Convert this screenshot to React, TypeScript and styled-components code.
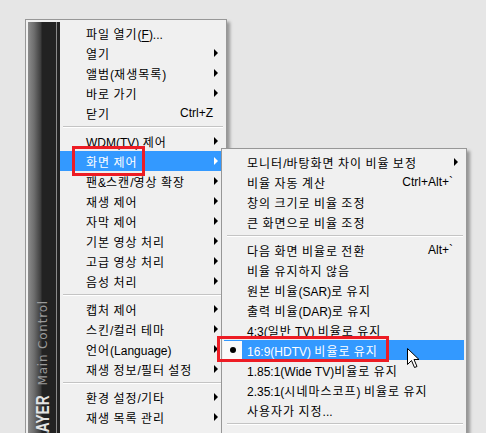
import React from 'react';
import styled, { createGlobalStyle } from 'styled-components';

const GlobalStyle = createGlobalStyle`
  html, body { margin: 0; padding: 0; }
  body {
    background: #e6e6e6;
    font-family: "Liberation Sans", "Noto Sans CJK KR", sans-serif;
    font-size: 12px;
    color: #000;
  }
`;

// Hangul glyphs from the CJK font run narrower than the original UI font
const Hangul = styled.span`
  letter-spacing: 1px;
`;

const Txt = ({ s }: { s: string }) => (
  <>
    {s.split(/([\uAC00-\uD7A3]+)/).map((part, i) =>
      /[\uAC00-\uD7A3]/.test(part) ? <Hangul key={i}>{part}</Hangul> : part
    )}
  </>
);

type Entry =
  | 'sep'
  | { label: React.ReactNode; shortcut?: string; sub?: boolean; active?: boolean; checked?: boolean };

const mainItems: Entry[] = [
  { label: <><Txt s="파일 열기" />(<u>F</u>)...</> },
  { label: '열기', sub: true },
  { label: '앨범(재생목록)', sub: true },
  { label: '바로 가기', sub: true },
  { label: '닫기', shortcut: 'Ctrl+Z' },
  'sep',
  { label: 'WDM(TV) 제어', sub: true },
  { label: '화면 제어', sub: true, active: true },
  { label: '팬&스캔/영상 확장', sub: true },
  { label: '재생 제어', sub: true },
  { label: '자막 제어', sub: true },
  { label: '기본 영상 처리', sub: true },
  { label: '고급 영상 처리', sub: true },
  { label: '음성 처리', sub: true },
  'sep',
  { label: '캡처 제어', sub: true },
  { label: '스킨/컬러 테마', sub: true },
  { label: '언어(Language)', sub: true },
  { label: '재생 정보/필터 설정', sub: true },
  'sep',
  { label: '환경 설정/기타', sub: true },
  { label: '재생 목록 관리', sub: true },
];

const screenItems: Entry[] = [
  { label: '모니터/바탕화면 차이 비율 보정', sub: true },
  { label: '비율 자동 계산', shortcut: 'Ctrl+Alt+`' },
  { label: '창의 크기로 비율 조정' },
  { label: '큰 화면으로 비율 조정' },
  'sep',
  { label: '다음 화면 비율로 전환', shortcut: 'Alt+`' },
  { label: '비율 유지하지 않음' },
  { label: '원본 비율(SAR)로 유지' },
  { label: '출력 비율(DAR)로 유지' },
  { label: '4:3(일반 TV) 비율로 유지' },
  { label: '16:9(HDTV) 비율로 유지', active: true, checked: true },
  { label: '1.85:1(Wide TV)비율로 유지' },
  { label: '2.35:1(시네마스코프) 비율로 유지' },
  { label: '사용자가 지정...' },
  'sep',
];

const Stage = styled.div`
  position: relative;
  height: 433px;
  overflow: hidden;
  padding: 19px 0 0 25px;
  box-sizing: border-box;
`;

const MenuBox = styled.div<{ $width: number }>`
  width: ${p => p.$width}px;
  box-sizing: border-box;
  background: #f0f0f0;
  border: 1px solid #979797;
  box-shadow: 3px 3px 3px rgba(0, 0, 0, 0.35);
  padding: 2px;
  display: flex;
  align-items: stretch;
`;

const SubMenu = styled(MenuBox)`
  position: absolute;
  left: 221px;
  top: 148px;
  padding: 3px 2px 30px;
  flex-direction: column;
`;

const SideBar = styled.div`
  width: 32px;
  flex: none;
  background: linear-gradient(to right, #8c8c8c 0, #6e6e6e 6px, #3c3c3c 13px, #222 14px,
    #222 28px, #8a8a8a 28px, #8a8a8a 29px, #222 29px);
  padding: 278px 0 0 5px;
  box-sizing: border-box;
  display: flex;
  flex-direction: column;
  overflow: hidden;
`;

const SideTitle = styled.div`
  writing-mode: vertical-rl;
  transform: rotate(180deg);
  line-height: 20px;
  white-space: nowrap;
  color: #9a9a9a;
`;

const Brand = styled.span`
  display: inline-block;
  font-family: "Liberation Sans", Arial, sans-serif;
  font-weight: bold;
  font-size: 19px;
  color: #e4e4e4;
  margin-inline-end: 10px;
  transform-origin: center bottom;
  transform: scaleY(0.72);
`;

const Caption = styled.span`
  font-family: "DejaVu Sans", sans-serif;
  font-size: 12px;
  letter-spacing: 0.8px;
`;

const Items = styled.div`
  flex: 1;
  padding: 1px 0 40px;
  display: flex;
  flex-direction: column;
`;

const Row = styled.div<{ $active?: boolean; $indent: number }>`
  height: 20px;
  display: flex;
  align-items: center;
  padding-left: ${p => p.$indent}px;
  white-space: nowrap;
  background: ${p => (p.$active ? '#3399ff' : 'transparent')};
  color: ${p => (p.$active ? '#fff' : '#000')};
  u { text-decoration: underline; text-underline-offset: 2px; }
`;

const CheckCell = styled.div<{ $on?: boolean }>`
  width: 19px;
  height: 18px;
  margin: 0 5px 0 -1px;
  display: flex;
  align-items: center;
  justify-content: center;
  background: ${p => (p.$on ? '#fafafa' : 'transparent')};
`;

const Dot = styled.span`
  width: 6px;
  height: 6px;
  border-radius: 50%;
  background: #000;
`;

const Label = styled.span`
  flex: 1;
`;

const Shortcut = styled.span``;

const ArrowCell = styled.span`
  width: 11px;
  flex: none;
  display: flex;
  align-items: center;
  padding-left: 1px;
  box-sizing: border-box;
`;

const Arrow = styled.span<{ $light?: boolean }>`
  width: 0;
  height: 0;
  border-left: 4px solid ${p => (p.$light ? '#fff' : '#000')};
  border-top: 4px solid transparent;
  border-bottom: 4px solid transparent;
`;

const Separator = styled.div<{ $from: number; $to: number }>`
  height: 8px;
  display: flex;
  align-items: center;
  padding: 0 ${p => p.$to}px 0 ${p => p.$from}px;
  &::after {
    content: '';
    flex: 1;
    border-top: 1px solid #c4c4c4;
    border-bottom: 1px solid #fff;
    box-sizing: border-box;
    height: 2px;
  }
`;

const Callout = styled.div<{ $x: number; $y: number; $w: number; $h: number }>`
  position: absolute;
  left: ${p => p.$x}px;
  top: ${p => p.$y}px;
  width: ${p => p.$w}px;
  height: ${p => p.$h}px;
  border: 3px solid #ed1c24;
  box-sizing: border-box;
  pointer-events: none;
`;

const Pointer = styled.svg`
  position: absolute;
  left: 407px;
  top: 348px;
`;

const MenuRows = ({ items, check, sepFrom, sepTo }: { items: Entry[]; check: boolean; sepFrom: number; sepTo: number }) => (
  <>
    {items.map((it, i) =>
      it === 'sep' ? (
        <Separator key={i} $from={sepFrom} $to={sepTo} />
      ) : (
        <Row key={i} $active={it.active} $indent={check ? 0 : 26}>
          {check && <CheckCell $on={it.checked}>{it.checked && <Dot />}</CheckCell>}
          <Label>{typeof it.label === 'string' ? <Txt s={it.label} /> : it.label}</Label>
          {it.shortcut && <Shortcut>{it.shortcut}</Shortcut>}
          <ArrowCell>{it.sub && <Arrow $light={it.active} />}</ArrowCell>
        </Row>
      )
    )}
  </>
);

export default function App() {
  return (
    <>
      <GlobalStyle />
      <Stage>
        <MenuBox $width={202}>
          <SideBar>
            <SideTitle>
              <Brand>KMPLAYER</Brand>
              <Caption>Main Control</Caption>
            </SideTitle>
          </SideBar>
          <Items>
            <MenuRows items={mainItems} check={false} sepFrom={3} sepTo={1} />
          </Items>
        </MenuBox>
        <SubMenu $width={246}>
          <MenuRows items={screenItems} check sepFrom={3} sepTo={1} />
        </SubMenu>
        <Callout $x={72} $y={146} $w={73} $h={30} />
        <Callout $x={217} $y={336} $w={172} $h={26} />
        <Pointer width="13" height="21" viewBox="0 0 13 21">
          <path
            d="M0.5 0.5 L0.5 16.5 L4.5 12.5 L7.5 19.5 L10 18.5 L7 11.5 L12 11.5 Z"
            fill="#fff"
            stroke="#000"
            strokeWidth="1"
            strokeLinejoin="miter"
          />
        </Pointer>
      </Stage>
    </>
  );
}
